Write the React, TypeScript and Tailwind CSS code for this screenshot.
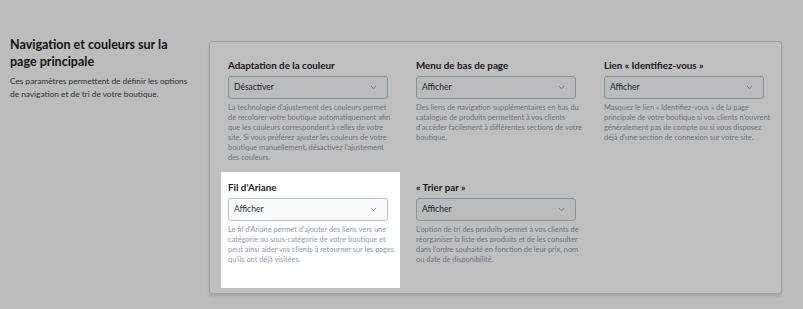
import { ChevronDown } from 'lucide-react';

type Field = {
  label: string;
  value: string;
  help: string[];
  focus?: boolean;
};

const FIELDS: Field[] = [
  {
    label: 'Adaptation de la couleur',
    value: 'Désactiver',
    help: [
      "La technologie d'ajustement des couleurs permet",
      'de recolorer votre boutique automatiquement afin',
      'que les couleurs correspondent à celles de votre',
      'site. Si vous préférez ajuster les couleurs de votre',
      "boutique manuellement, désactivez l'ajustement",
      'des couleurs.',
    ],
  },
  {
    label: 'Menu de bas de page',
    value: 'Afficher',
    help: [
      'Des liens de navigation supplémentaires en bas du',
      'catalogue de produits permettent à vos clients',
      "d'accéder facilement à différentes sections de votre",
      'boutique.',
    ],
  },
  {
    label: 'Lien « Identifiez-vous »',
    value: 'Afficher',
    help: [
      'Masquez le lien « Identifiez-vous » de la page',
      "principale de votre boutique si vos clients n'ouvrent",
      'généralement pas de compte ou si vous disposez',
      "déjà d'une section de connexion sur votre site.",
    ],
  },
  {
    label: "Fil d'Ariane",
    value: 'Afficher',
    focus: true,
    help: [
      "Le fil d'Ariane permet d'ajouter des liens vers une",
      'catégorie ou sous-catégorie de votre boutique et',
      'peut ainsi aider vos clients à retourner sur les pages',
      "qu'ils ont déjà visitées.",
    ],
  },
  {
    label: '« Trier par »',
    value: 'Afficher',
    help: [
      'L’option de tri des produits permet à vos clients de',
      'réorganiser la liste des produits et de les consulter',
      'dans l’ordre souhaité en fonction de leur prix, nom',
      'ou date de disponibilité.',
    ],
  },
];

function FieldCell({ f }: { f: Field }) {
  return (
    <div
      className={
        f.focus
          ? 'relative z-10 bg-white px-[7px] pt-[8px] shadow-[0_0_0_9999px_rgba(0,0,0,0.25)]'
          : 'px-[7px] pt-[8px]'
      }
    >
      <div className="text-[9.8px] font-bold leading-[14px] text-[#1f2328]">{f.label}</div>
      <div className="mt-[4px] flex h-[23px] w-[160px] items-center justify-between rounded-[3px] border border-[#b9c3cf] bg-[#f9fafb] pl-[5px] pr-[9px]">
        <span className="text-[8.5px] text-[#2b2f36]">{f.value}</span>
        <ChevronDown size={9} strokeWidth={2} className="text-[#7d8896]" />
      </div>
      <div className="mt-[4px] text-[7.4px] leading-[10px] text-[#8c9bb0]">
        {f.help.map((l) => (
          <div key={l} className="whitespace-nowrap">
            {l}
          </div>
        ))}
      </div>
    </div>
  );
}

export default function App() {
  return (
    <div className="h-[309px] w-[803px] overflow-hidden bg-[#fbfbfb] font-['Lato',sans-serif]">
      <div className="flex pl-[10px] pt-[41px]">
        <div className="-mt-[5px] w-[199px]">
          <h2 className="text-[12.5px] font-bold leading-[17px] text-[#16181c]">
            Navigation et couleurs sur la
            <br />
            page principale
          </h2>
          <p className="mt-[5px] text-[8.3px] leading-[13px] text-[#3a3f47]">
            Ces paramètres permettent de définir les options
            <br />
            de navigation et de tri de votre boutique.
          </p>
        </div>
        <div className="h-[253px] w-[573px] rounded-[3px] border border-[#d4d6da] bg-white pl-[11px] pt-[8px] shadow-[0_2px_3px_rgba(0,0,0,0.12)]">
          <div className="grid grid-cols-[179px_179px_179px] grid-rows-[116px_116px] gap-x-[9px] gap-y-[6px]">
            {FIELDS.map((f) => (
              <FieldCell key={f.label} f={f} />
            ))}
          </div>
        </div>
      </div>
    </div>
  );
}
